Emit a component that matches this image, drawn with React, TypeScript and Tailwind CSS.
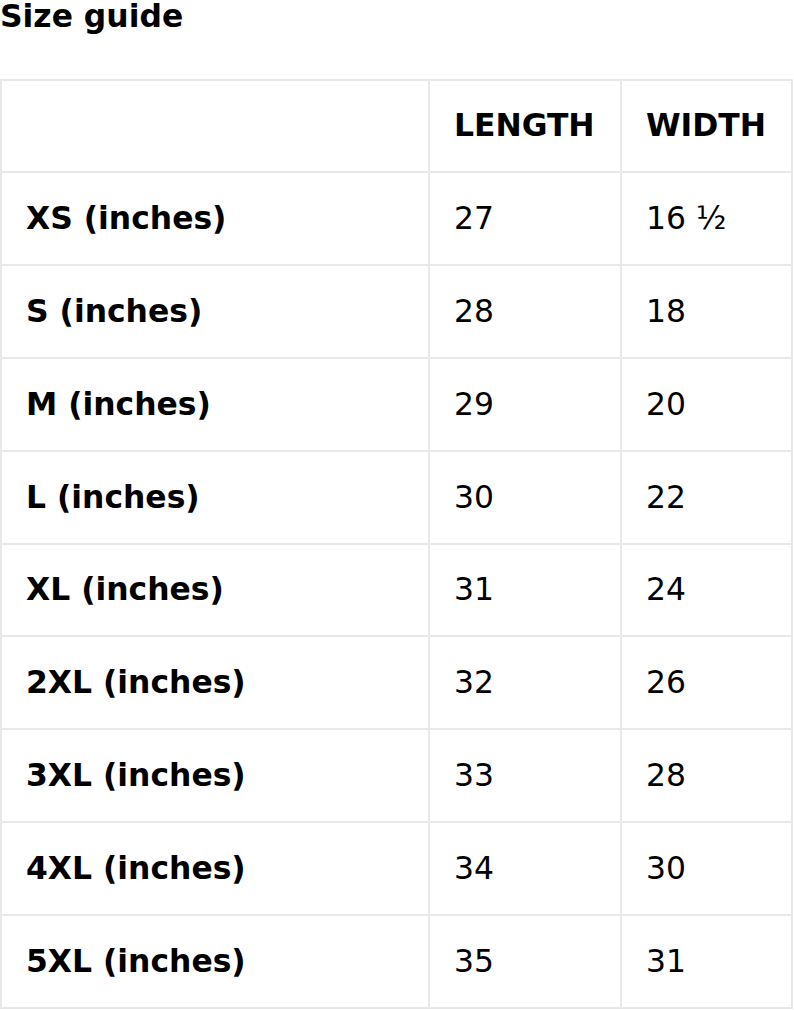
const rows: [string, string, string][] = [
  ['XS (inches)', '27', '16 ½'],
  ['S (inches)', '28', '18'],
  ['M (inches)', '29', '20'],
  ['L (inches)', '30', '22'],
  ['XL (inches)', '31', '24'],
  ['2XL (inches)', '32', '26'],
  ['3XL (inches)', '33', '28'],
  ['4XL (inches)', '34', '30'],
  ['5XL (inches)', '35', '31'],
];

export default function App() {
  return (
    <div className="bg-white text-black font-['DejaVu_Sans',sans-serif] text-[31.4px] w-[794px]">
      <h1 className="font-bold leading-none mt-px h-[78px]">Size guide</h1>
      <table className="w-[793px] table-fixed border-collapse">
        <colgroup>
          <col className="w-[428px]" />
          <col className="w-[192px]" />
          <col />
        </colgroup>
        <thead>
          <tr className="h-[92px]">
            <th className="border-2 border-[#e8e8e8]" />
            <th className="border-2 border-[#e8e8e8] text-left font-bold pl-[24px]">LENGTH</th>
            <th className="border-2 border-[#e8e8e8] text-left font-bold pl-[24px]">WIDTH</th>
          </tr>
        </thead>
        <tbody>
          {rows.map(([size, length, width]) => (
            <tr key={size} className="h-[92.9px]">
              <td className="border-2 border-[#e8e8e8] font-bold pl-[24px]">{size}</td>
              <td className="border-2 border-[#e8e8e8] pl-[24px]">{length}</td>
              <td className="border-2 border-[#e8e8e8] pl-[24px]">{width}</td>
            </tr>
          ))}
        </tbody>
      </table>
    </div>
  );
}
